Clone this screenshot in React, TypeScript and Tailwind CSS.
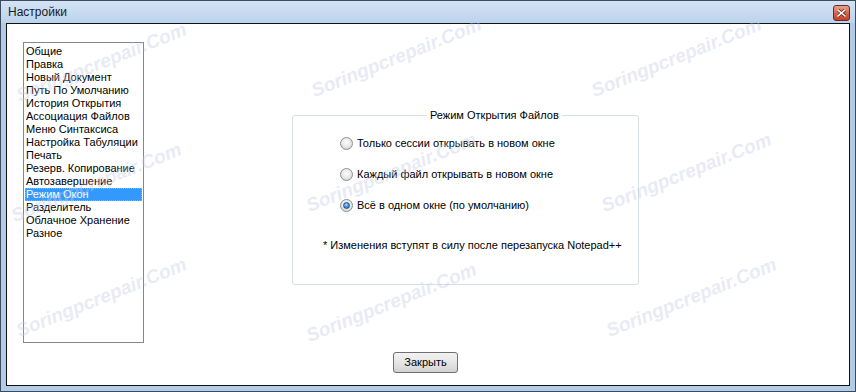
import React from 'react';

const pages = [
    'Общие',
    'Правка',
    'Новый Документ',
    'Путь По Умолчанию',
    'История Открытия',
    'Ассоциация Файлов',
    'Меню Синтаксиса',
    'Настройка Табуляции',
    'Печать',
    'Резерв. Копирование',
    'Автозавершение',
    'Режим Окон',
    'Разделитель',
    'Облачное Хранение',
    'Разное',
];

const modes = [
    'Только сессии открывать в новом окне',
    'Каждый файл открывать в новом окне',
    'Всё в одном окне (по умолчанию)',
];

// водяные знаки на скриншоте
const marks = [
    'left-[20px] top-[85px]',
    'left-[315px] top-[80px]',
    'left-[595px] top-[80px]',
    'left-[15px] top-[205px]',
    'left-[310px] top-[195px]',
    'left-[605px] top-[195px]',
    'left-[20px] top-[320px]',
    'left-[310px] top-[325px]',
    'left-[610px] top-[320px]',
];

const Radio = ({ checked }: { checked: boolean }) => (
    <span className="relative w-[13px] h-[13px] rounded-full border border-[#8e8f8f] bg-[radial-gradient(circle_at_50%_40%,#ffffff_0%,#e6e6e6_55%,#c9c9c9_100%)] flex items-center justify-center shrink-0">
        {checked && (
            <span className="w-[7px] h-[7px] rounded-full border border-[#1f4f86] bg-[radial-gradient(circle_at_45%_35%,#a9dcff_0%,#3d8ed8_55%,#1b5aa0_100%)]" />
        )}
    </span>
);

const CloseIcon = () => (
    <svg width="9" height="8" viewBox="0 0 9 8">
        <path d="M1 1 L8 7 M8 1 L1 7" stroke="#5b2418" strokeWidth="3" strokeLinecap="square" />
        <path d="M1 1 L8 7 M8 1 L1 7" stroke="#ffffff" strokeWidth="1.6" strokeLinecap="square" />
    </svg>
);

export default function App() {
    const selected = 'Режим Окон';
    const mode = 2;

    return (
        <div className="relative w-[856px] h-[392px] overflow-hidden border border-[#3c4c5e] bg-[#b4cbe6] flex flex-col font-['Liberation_Sans',Arial,sans-serif] text-[11px] text-black">
            {/* Заголовок окна */}
            <div className="h-[22px] flex items-start justify-between pl-[7px] pr-[5px] bg-gradient-to-b from-[#d3e3f5] to-[#bcd3ec]">
                <span className="pt-[4px] text-[12px] leading-[15px] text-[#1a1a1a]">Настройки</span>
                <button className="mt-[4px] w-[17px] h-[16px] rounded-[3px] border border-[#6b2a1c] bg-gradient-to-b from-[#e8a28f] via-[#d4664c] to-[#c2412a] flex items-center justify-center">
                    <CloseIcon />
                </button>
            </div>

            {/* Клиентская область */}
            <div className="flex-1 mx-[5px] mb-[5px] border border-[#111] bg-white flex flex-col">
                <div className="flex items-start pl-[16px] pt-[18px]">
                    {/* Список страниц */}
                    <div className="w-[121px] h-[301px] border border-[#828790] pt-[2px] px-[1px] flex flex-col">
                        {pages.map(p => (
                            <div
                                key={p}
                                className={
                                    p === selected
                                        ? 'h-[13px] leading-[13px] pl-[1px] bg-[#3399ff] text-white outline outline-1 outline-dotted outline-[#f0a040] -outline-offset-1 whitespace-nowrap'
                                        : 'h-[13px] leading-[13px] pl-[1px] whitespace-nowrap'
                                }
                            >
                                {p}
                            </div>
                        ))}
                    </div>

                    {/* Режим открытия файлов */}
                    <fieldset className="ml-[148px] mt-[66px] w-[347px] min-w-0 h-[177px] border border-[#d5dfe5] rounded-[3px] p-0">
                        <legend className="ml-[134px] px-[3px] leading-[14px]">Режим Открытия Файлов</legend>
                        <div className="flex flex-col pl-[47px] pt-[14px] gap-[17px]">
                            {modes.map((m, i) => (
                                <label key={m} className="h-[14px] flex items-center gap-[4px] leading-[14px] whitespace-nowrap">
                                    <Radio checked={i === mode} />
                                    <span>{m}</span>
                                </label>
                            ))}
                        </div>
                        <div className="pl-[30px] mt-[26px] h-[14px] leading-[14px] whitespace-nowrap">
                            * Изменения вступят в силу после перезапуска Notepad++
                        </div>
                    </fieldset>
                </div>

                {/* Кнопка */}
                <div className="pl-[386px] mt-[9px]">
                    <button className="w-[65px] h-[21px] rounded-[3px] border border-[#707070] bg-gradient-to-b from-[#f2f2f2] via-[#e6e6e6] to-[#d2d2d2] leading-[19px]">
                        Закрыть
                    </button>
                </div>
            </div>

            {marks.map((pos, i) => (
                <span
                    key={i}
                    aria-hidden="true"
                    className={`pointer-events-none select-none absolute ${pos} origin-bottom-left -rotate-[22deg] whitespace-nowrap text-[19px] leading-[20px] font-bold italic text-[#c3cae9]/40`}
                >
                    Soringpcrepair.Com
                </span>
            ))}
        </div>
    );
}
